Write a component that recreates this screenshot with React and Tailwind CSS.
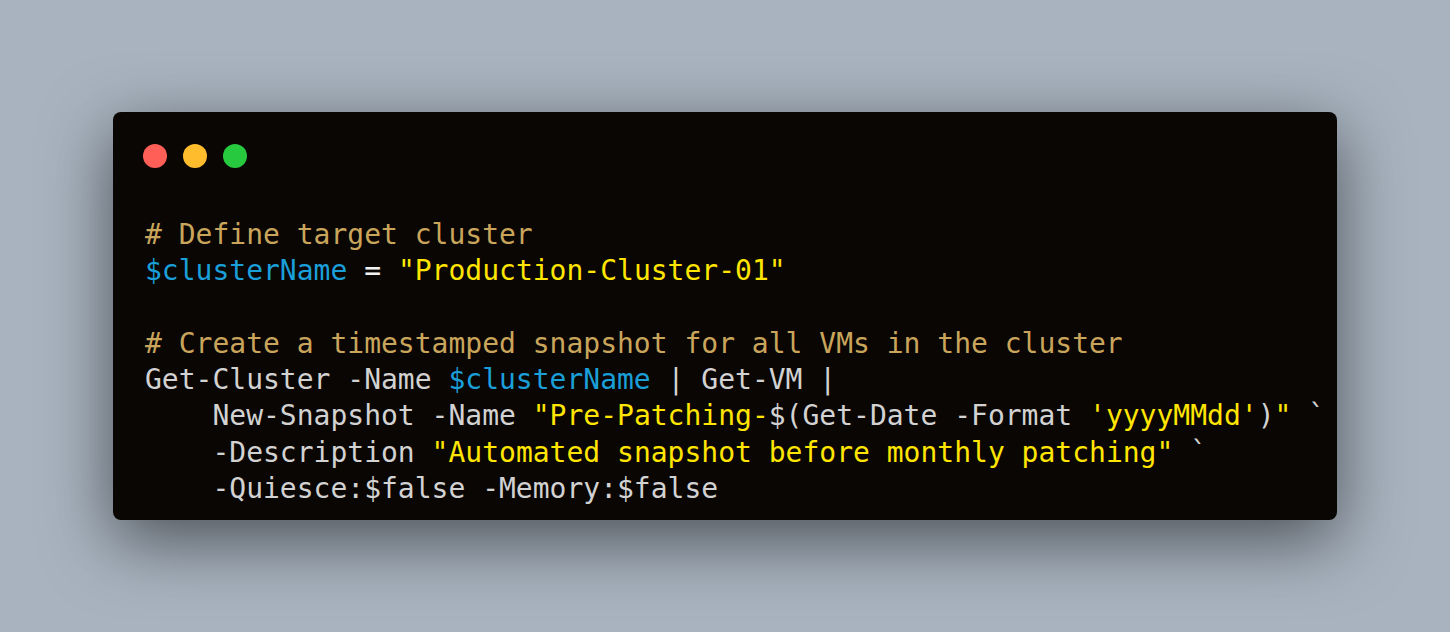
export default function App() {
  const C = ({ children }) => <span className="text-[#c9a55c]">{children}</span>;
  const V = ({ children }) => <span className="text-[#1b9fd9]">{children}</span>;
  const S = ({ children }) => <span className="text-[#ffe500]">{children}</span>;
  const W = ({ children }) => <span className="text-[#f2f2f2]">{children}</span>;
  return (
    <div className="w-[1450px] h-[632px] bg-[#a8b3bf] flex items-center justify-center">
      <div className="w-[1224px] h-[408px] bg-[#0a0604] rounded-[8px] shadow-[0_20px_68px_rgba(0,0,0,0.55)] pt-[32px] pl-[30px] overflow-hidden">
        <div className="flex gap-[16px]">
          <div className="w-[24px] h-[24px] rounded-full bg-[#ff5f56]" />
          <div className="w-[24px] h-[24px] rounded-full bg-[#ffbd2e]" />
          <div className="w-[24px] h-[24px] rounded-full bg-[#27c93f]" />
        </div>
        <pre
          className="mt-[49px] pl-[2px] text-[28px] leading-[36.3px] text-[#d2d2d2] whitespace-pre"
          style={{ fontFamily: '"DejaVu Sans Mono", "Liberation Mono", monospace' }}
        >
          <C># Define target cluster</C>{"\n"}
          <V>$clusterName</V> <W>=</W> <S>"Production-Cluster-01"</S>{"\n"}
          {"\n"}
          <C># Create a timestamped snapshot for all VMs in the cluster</C>{"\n"}
          Get-Cluster -Name <V>$clusterName</V> | Get-VM |{"\n"}
          {"    "}New-Snapshot -Name <S>"Pre-Patching-</S>$(Get-Date -Format <S>'yyyyMMdd'</S>)<S>"</S> `{"\n"}
          {"    "}-Description <S>"Automated snapshot before monthly patching"</S> `{"\n"}
          {"    "}-Quiesce:$false -Memory:$false
        </pre>
      </div>
    </div>
  );
}
